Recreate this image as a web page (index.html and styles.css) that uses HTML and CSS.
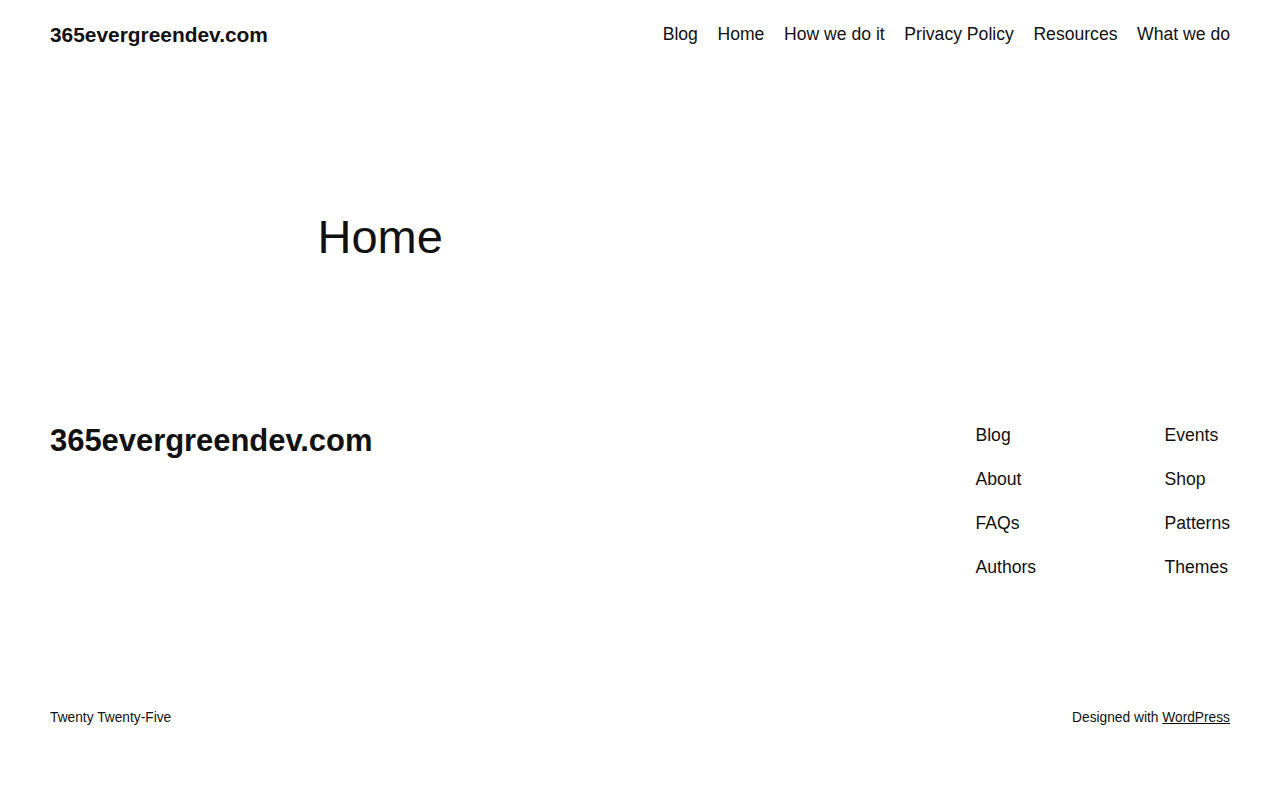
FILE: index.html
```html
<!DOCTYPE html>
<html lang="en">
<head>
<meta charset="utf-8">
<title>Home – 365evergreendev.com</title>
<link rel="stylesheet" href="styles.css">
</head>
<body>
<header class="site-header">
  <a class="site-title" href="#">365evergreendev.com</a>
  <nav class="main-nav">
    <a href="#">Blog</a>
    <a href="#">Home</a>
    <a href="#">How we do it</a>
    <a href="#">Privacy Policy</a>
    <a href="#">Resources</a>
    <a href="#">What we do</a>
  </nav>
</header>
<main class="content">
  <h1 class="page-title">Home</h1>
</main>
<footer class="site-footer">
  <div class="footer-top">
    <a class="footer-title" href="#">365evergreendev.com</a>
    <div class="footer-navs">
      <nav class="footer-col first">
        <a href="#">Blog</a>
        <a href="#">About</a>
        <a href="#">FAQs</a>
        <a href="#">Authors</a>
      </nav>
      <nav class="footer-col">
        <a href="#">Events</a>
        <a href="#">Shop</a>
        <a href="#">Patterns</a>
        <a href="#">Themes</a>
      </nav>
    </div>
  </div>
  <div class="footer-bottom">
    <span>Twenty Twenty-Five</span>
    <span>Designed with <a href="#">WordPress</a></span>
  </div>
</footer>
</body>
</html>
```
FILE: styles.css
```css
* { box-sizing: border-box; }
html, body { margin: 0; padding: 0; background: #fff; }
body {
  font-family: "Liberation Sans", Arial, sans-serif;
  color: #111;
}
a { color: #111; text-decoration: none; }

.site-header {
  display: flex;
  justify-content: space-between;
  align-items: center;
  height: 69px;
  padding: 0 50px;
}
.site-title {
  font-size: 20.9px;
  font-weight: 700;
  line-height: 1.3;
}
.main-nav {
  display: flex;
  gap: 19.6px;
  font-size: 17.6px;
  line-height: 1.5;
}

.content {
  width: 645px;
  margin: 0 auto;
  padding-top: 141px;
}
.page-title {
  margin: 0;
  font-size: 47px;
  font-weight: 400;
  line-height: 54px;
}

.site-footer {
  padding: 158px 50px 0;
}
.footer-top {
  display: flex;
  justify-content: space-between;
  align-items: flex-start;
}
.footer-title {
  font-size: 31px;
  font-weight: 700;
  line-height: 38px;
  letter-spacing: -0.05px;
}
.footer-navs {
  display: flex;
}
.footer-col {
  display: flex;
  flex-direction: column;
  gap: 17px;
  font-size: 17.6px;
  line-height: 27px;
}
.footer-col.first { width: 189px; }

.footer-bottom {
  display: flex;
  justify-content: space-between;
  margin-top: 124px;
  font-size: 13.75px;
  line-height: 26px;
}
.footer-bottom a { text-decoration: underline; }
```
